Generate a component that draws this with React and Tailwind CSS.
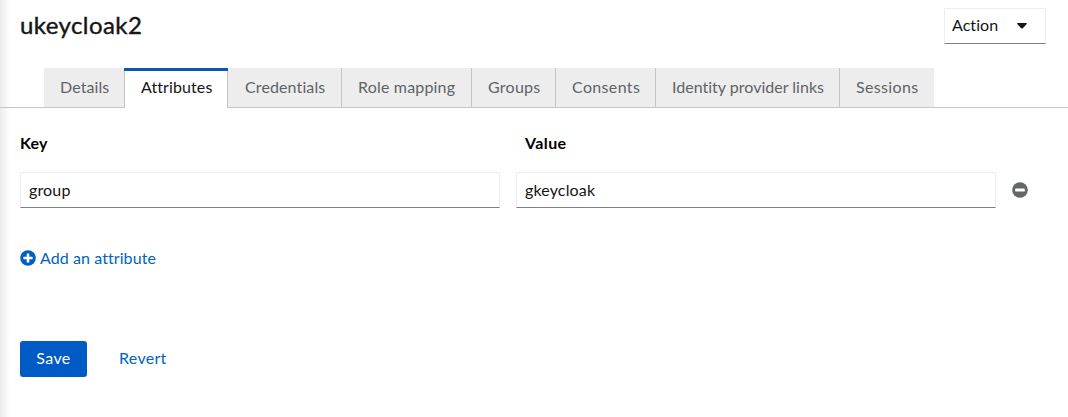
import React from 'react';

const tabs = [
  { label: 'Details', box: 'w-[81px] border-r', text: 'tracking-[0.1px]' },
  { label: 'Attributes', box: 'w-[103px] border-r', text: 'tracking-[0.1px]', active: true },
  { label: 'Credentials', box: 'w-[114px] border-r', text: 'ml-px tracking-[0.12px]' },
  { label: 'Role mapping', box: 'w-[130px] border-r', text: 'tracking-[0.18px]' },
  { label: 'Groups', box: 'w-[84px] border-r', text: 'tracking-[0.25px]' },
  { label: 'Consents', box: 'w-[100px] border-r', text: 'tracking-[0.35px]' },
  { label: 'Identity provider links', box: 'w-[184px] border-r', text: 'tracking-[0.01px]' },
  { label: 'Sessions', box: 'w-[94px]', text: 'tracking-[0.35px]' },
];

function Tab({ label, box, text, active }) {
  return (
    <button
      className={`relative flex shrink-0 items-center justify-start whitespace-nowrap border-[#c6c6c6] pl-4 leading-6 ${box} ${
        active ? 'h-10 bg-white pb-[3px] text-[#151515]' : 'h-[39px] bg-[#ededed] pb-0.5 text-[#5f6367]'
      }`}
    >
      {active && <span className="absolute -left-px -right-px top-0 h-[3px] bg-[#0b57ad]" />}
      <span className={text}>{label}</span>
    </button>
  );
}

function Field({ value }) {
  return (
    <input
      className="h-9 w-[480px] border border-[#ededed] border-b-[#7d8084] bg-white px-2 pb-0.5 tracking-[0.15px] text-[#151515] outline-none"
      defaultValue={value}
    />
  );
}

export default function App() {
  return (
    <div className="flex h-[417px] w-[1068px] overflow-hidden bg-white font-['Lato',sans-serif] text-[16px] leading-6 text-[#151515]">
      <div className="-mr-2.5 w-2.5 shrink-0 bg-linear-to-r from-[#ebebeb] to-white" />
      <main className="z-10 flex w-[1068px] shrink-0 flex-col">
        <header className="flex h-[68px] items-start justify-between pl-5 pr-[22px] pt-2">
          <h1 className="mt-px text-[24px] leading-8 tracking-[0.42px] [-webkit-text-stroke:0.4px_#151515]">ukeycloak2</h1>
          <button className="flex h-9 w-[102px] items-center border border-[#ededed] border-b-[#7d8084] pl-[7px]">
            <span className="w-[65px] pb-0.5 text-left tracking-[0.05px]">Action</span>
            <svg className="h-[6px] w-[10px]" viewBox="0 0 10 6" fill="#151515">
              <path d="M.7 0h8.6q1 .1.4 1L5.8 5.2q-.8.7-1.6 0L.3 1Q-.3.1.7 0z" />
            </svg>
          </button>
        </header>
        <nav className="flex h-10 items-start border-b border-[#c6c6c6] pl-11">
          {tabs.map((tab) => (
            <Tab key={tab.label} {...tab} />
          ))}
        </nav>
        <section className="flex flex-col pl-5 pt-[23px]">
          <div className="flex font-bold text-black">
            <span className="w-[505px] tracking-[0.2px]">Key</span>
            <span className="tracking-[0.4px]">Value</span>
          </div>
          <div className="mt-[17px] flex items-center gap-4">
            <Field value="group" />
            <Field value="gkeycloak" />
            <button aria-label="Remove attribute">
              <svg className="size-4" viewBox="0 0 16 16">
                <circle cx="8" cy="8" r="7.8" fill="#63666b" />
                <rect x="3.2" y="6.6" width="9.6" height="2.8" rx=".5" fill="white" />
              </svg>
            </button>
          </div>
          <button className="mt-[38px] flex items-center gap-1 self-start text-[#0062c4]">
            <svg className="size-4" viewBox="0 0 16 16">
              <circle cx="8" cy="8" r="7.8" fill="#005fc0" />
              <path d="M6.7 3.4h2.6v3.3h3.3v2.6H9.3v3.3H6.7V9.3H3.4V6.7h3.3z" fill="white" />
            </svg>
            <span className="tracking-[0.08px]">Add an attribute</span>
          </button>
          <div className="mt-[71px] flex items-center">
            <button className="h-9 w-[67px] rounded-[3px] bg-[#005cc4] pb-0.5 tracking-[0.4px] text-white">Save</button>
            <button className="ml-8 pb-0.5 tracking-[0.3px] text-[#0062c4]">Revert</button>
          </div>
        </section>
      </main>
    </div>
  );
}
